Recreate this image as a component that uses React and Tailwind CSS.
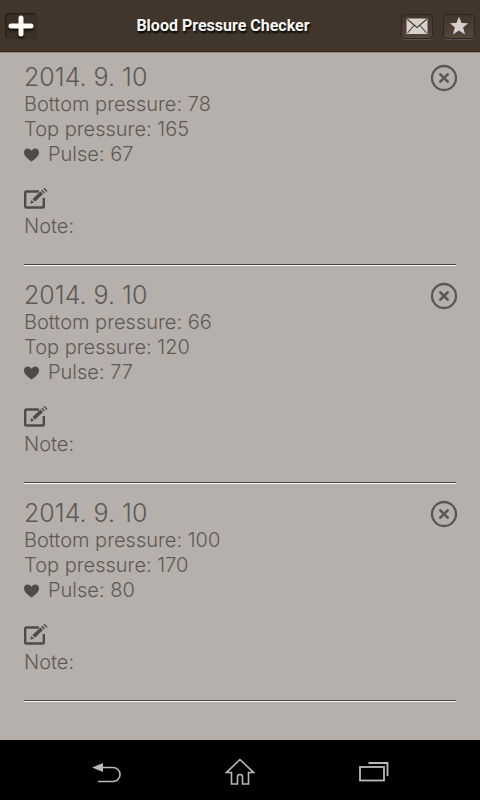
import React from 'react';

const records = [
  { id: 1, date: '2014. 9. 10', bottom: 78, top: 165, pulse: 67, note: '' },
  { id: 2, date: '2014. 9. 10', bottom: 66, top: 120, pulse: 77, note: '' },
  { id: 3, date: '2014. 9. 10', bottom: 100, top: 170, pulse: 80, note: '' },
];

const PlusIcon = () => (
  <svg width="28" height="28" viewBox="0 0 28 28" className="drop-shadow-[0_2px_1px_rgba(0,0,0,0.7)]">
    <path d="M14 6v16M4 14h20" stroke="#fffdf8" strokeWidth="5" strokeLinecap="round" />
  </svg>
);

const MailIcon = () => (
  <svg width="22" height="18" viewBox="0 0 22 18">
    <rect x="0.500" y="1.500" width="21" height="15.500" fill="#d6d1cc" />
    <path d="M1 2l10 8.500L21 2M1.500 16l6.500-7.500M20.500 16L14 8.500" fill="none" stroke="#4a3d33" strokeWidth="1.100" />
  </svg>
);

const StarIcon = () => (
  <svg width="20" height="20" viewBox="0 0 20 20">
    <path d="M10 .8l2.600 6.200 6.500.3-5 4.300 2 6.800L10 14.600 3.900 18.400l2-6.800-5-4.300L7.400 7z" fill="#d6d1cc" />
  </svg>
);

const CloseIcon = () => (
  <svg width="28" height="28" viewBox="0 0 28 28" fill="none" stroke="#5a5856">
    <circle cx="14" cy="14" r="12" strokeWidth="2.300" />
    <path d="M10.300 10.300l7.400 7.400M17.700 10.300l-7.400 7.400" strokeWidth="2.600" strokeLinecap="round" />
  </svg>
);

const HeartIcon = () => (
  <svg width="16" height="14" viewBox="0 0 16 14">
    <path d="M7.500 13.500C4.500 11 0 8.200 0 4.400 0 2 1.700.5 3.700.5c1.800 0 3.100 1 3.800 2.300C8.200 1.500 9.500.5 11.300.5c2 0 3.700 1.500 3.700 3.900 0 3.800-4.500 6.600-7.500 9.100z" fill="#514b46" />
  </svg>
);

const EditIcon = () => (
  <svg width="24" height="21" viewBox="0 0 24 21">
    <path d="M15 3.500H2.500A1.300 1.300 0 0 0 1.200 4.800v13.400a1.300 1.300 0 0 0 1.300 1.300h16a1.300 1.300 0 0 0 1.300-1.300V10" fill="none" stroke="#514b46" strokeWidth="2.400" />
    <path d="M8.500 11L16.500 3.400l2.500 2.700-8 7.600z" fill="#514b46" />
    <path d="M7.500 12l2.500 2.600-4 1.200z" fill="#514b46" />
    <path d="M17.700 2.100l2.700 2.900M20 .2l3 3.200" stroke="#514b46" strokeWidth="1.400" />
  </svg>
);

const BackIcon = () => (
  <svg width="30" height="22" viewBox="-1 0 30 22">
    <path d="M0 6.500l11-4.500v9z" fill="#b9b9b9" />
    <path d="M11 6.500h10a7 7 0 0 1 0 14H6" fill="none" stroke="#b9b9b9" strokeWidth="1.600" />
  </svg>
);

const HomeIcon = () => (
  <svg width="30" height="28" viewBox="0 0 30 28">
    <path d="M15 1.500L1.500 14.500h5V26h6v-7a2.500 2.500 0 0 1 5 0v7h6V14.500h5z" fill="none" stroke="#b9b9b9" strokeWidth="1.600" />
  </svg>
);

const RecentIcon = () => (
  <svg width="30" height="20" viewBox="0 0 30 20" fill="none" stroke="#b9b9b9">
    <rect x="1" y="5" width="24" height="13.500" strokeWidth="1.800" />
    <path d="M9.500 1H28.500V14" strokeWidth="1.800" />
  </svg>
);

const headerButton = 'flex items-center justify-center rounded border border-[#2f251e] bg-gradient-to-b from-[#42352a] to-[#54453b] shadow-[0_1px_0_#5d5046]';

const Header = () => (
  <header className="flex h-[53px] items-center border-b border-[#8f8781] bg-[#40362b] px-[5px] shadow-[inset_0_-1px_0_#33241d]">
    <div className="flex w-20">
      <button type="button" aria-label="Add record" className="flex h-[26px] w-8 items-center justify-center rounded bg-[#3b3026] shadow-[inset_1px_1px_2px_#241b14]">
        <PlusIcon />
      </button>
    </div>
    <h1 className="flex-1 pr-10 text-center font-[Roboto,sans-serif] text-base font-bold text-[#f8f6f3] [text-shadow:1px_2px_2px_#000]">
      Blood Pressure Checker
    </h1>
    <div className="flex gap-2.5">
      <button type="button" aria-label="Send by mail" className={`h-[25px] w-8 ${headerButton}`}>
        <MailIcon />
      </button>
      <button type="button" aria-label="Rate" className={`h-[25px] w-8 ${headerButton}`}>
        <StarIcon />
      </button>
    </div>
  </header>
);

const RecordItem = ({ record }) => (
  <li className="border-b border-[#fbf8f6] text-xl leading-[25px] font-light">
    <div className="border-b border-[#49413c] pb-[25px]">
      <div className="flex items-start justify-between">
        <h2 className="text-[25px] leading-[30px]">{record.date}</h2>
        <button type="button" aria-label="Delete record" className="-mr-0.5 pt-0.5">
          <CloseIcon />
        </button>
      </div>
      <p>Bottom pressure: {record.bottom}</p>
      <p>Top pressure: {record.top}</p>
      <p className="flex items-center gap-2">
        <HeartIcon />
        Pulse: {record.pulse}
      </p>
      <button type="button" aria-label="Edit note" className="mt-[21px] block">
        <EditIcon />
      </button>
      <p className="mt-[5px]">Note: {record.note}</p>
    </div>
  </li>
);

const NavBar = () => (
  <nav className="flex h-[60px] items-center justify-center gap-[104px] bg-black pt-1">
    <button type="button" aria-label="Back">
      <BackIcon />
    </button>
    <button type="button" aria-label="Home">
      <HomeIcon />
    </button>
    <button type="button" aria-label="Recent apps">
      <RecentIcon />
    </button>
  </nav>
);

const App = () => {
  return (
    <div className="flex min-h-screen flex-col bg-[#b5b0ac] font-[Inter,sans-serif] text-[#5f5955]">
      <Header />
      <main className="flex-1 px-6 pt-[9px]">
        <ul className="flex flex-col gap-[14px]">
          {records.map((record) => (
            <RecordItem key={record.id} record={record} />
          ))}
        </ul>
      </main>
      <NavBar />
    </div>
  );
};

export default App;
